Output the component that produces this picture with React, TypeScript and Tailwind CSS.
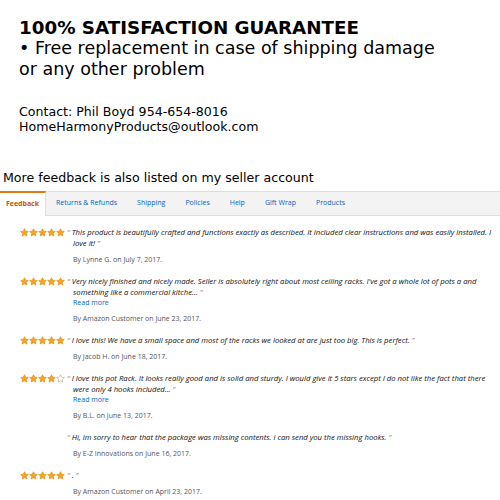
import React from "react";

const tabs = [
  "Feedback",
  "Returns & Refunds",
  "Shipping",
  "Policies",
  "Help",
  "Gift Wrap",
  "Products",
];

type Review = {
  stars: number | null;
  text: string;
  readMore?: boolean;
  by: string;
};

const reviews: Review[] = [
  {
    stars: 5,
    text: "This product is beautifully crafted and functions exactly as described. It included clear instructions and was easily installed. I love it!",
    by: "By Lynne G. on July 7, 2017.",
  },
  {
    stars: 5,
    text: "Very nicely finished and nicely made. Seller is absolutely right about most ceiling racks. I've got a whole lot of pots a and something like a commercial kitche...",
    readMore: true,
    by: "By Amazon Customer on June 23, 2017.",
  },
  {
    stars: 5,
    text: "I love this! We have a small space and most of the racks we looked at are just too big. This is perfect.",
    by: "By Jacob H. on June 18, 2017.",
  },
  {
    stars: 4,
    text: "I love this pot Rack. It looks really good and is solid and sturdy. I would give it 5 stars except I do not like the fact that there were only 4 hooks included...",
    readMore: true,
    by: "By B.L. on June 13, 2017.",
  },
  {
    stars: null,
    text: "Hi, im sorry to hear that the package was missing contents. i can send you the missing hooks.",
    by: "By E-Z Innovations on June 16, 2017.",
  },
  {
    stars: 5,
    text: ".",
    by: "By Amazon Customer on April 23, 2017.",
  },
];

function Star({ filled }: { filled: boolean }) {
  return (
    <svg width="9" height="9" viewBox="0 0 24 24">
      <path
        d="M12 1.8l3.1 6.6 7.2.9-5.3 5 1.4 7.1L12 17.9l-6.4 3.5 1.4-7.1-5.3-5 7.2-.9z"
        fill={filled ? "#f8a51d" : "#ffffff"}
        stroke={filled ? "#d9880f" : "#c8a060"}
        strokeWidth="1.6"
        strokeLinejoin="round"
      />
    </svg>
  );
}

function Stars({ count }: { count: number }) {
  return (
    <div className="flex">
      {[0, 1, 2, 3, 4].map((i) => (
        <Star key={i} filled={i < count} />
      ))}
    </div>
  );
}

export default function App() {
  return (
    <div className="w-[500px] h-[500px] overflow-hidden bg-white text-black">
      <div className="pl-[19px] pt-[17px] font-['DejaVu_Sans',Verdana,sans-serif]">
        <p className="text-[18.3px] leading-[21px] font-bold">
          100% SATISFACTION GUARANTEE
        </p>
        <p className="text-[17.5px] leading-[21px]">
          • Free replacement in case of shipping damage
          <br />
          or any other problem
        </p>
        <p className="mt-[24px] text-[12.6px] leading-[15px]">
          Contact: Phil Boyd 954-654-8016
          <br />
          HomeHarmonyProducts@outlook.com
        </p>
      </div>
      <p className="mt-[36px] pl-[3px] text-[12.6px] leading-[15px] font-['DejaVu_Sans',Verdana,sans-serif]">
        More feedback is also listed on my seller account
      </p>

      <div className="mt-[6px] font-['Open_Sans',sans-serif]">
        <div className="flex h-[25px] bg-[#f3f3f3] border-y border-[#dddddd] text-[7px]">
          {tabs.map((t, i) =>
            i === 0 ? (
              <div
                key={t}
                className="w-[46px] -my-px flex items-center justify-center bg-white border-t-2 border-[#e47911] border-r border-r-[#dddddd] font-bold text-[#c45500]"
              >
                {t}
              </div>
            ) : (
              <div key={t} className="px-[10px] flex items-center text-[#0066c0]">
                {t}
              </div>
            )
          )}
        </div>

        <div className="pt-[11px] flex flex-col gap-[11px]">
          {reviews.map((r, i) => (
            <div key={i} className="flex">
              <div className="w-[67px] pl-[20px] pt-[1px] shrink-0">
                {r.stars !== null && <Stars count={r.stars} />}
              </div>
              <div className="flex-1 pr-[5px]">
                <p className="italic text-[#0f1111] text-[7.7px] leading-[11px] pl-[6px] -indent-[6px]">
                  <span className="text-[#888]">“</span>
                  {" " + r.text + " "}
                  <span className="text-[#888]">”</span>
                </p>
                {r.readMore && (
                  <p className="pl-[6px] text-[#0066c0] text-[7px] leading-[10px]">
                    Read more
                  </p>
                )}
                <p className="pl-[6px] mt-[5px] text-[#555] text-[7px] leading-[11px]">
                  {r.by}
                </p>
              </div>
            </div>
          ))}
        </div>
      </div>
    </div>
  );
}
